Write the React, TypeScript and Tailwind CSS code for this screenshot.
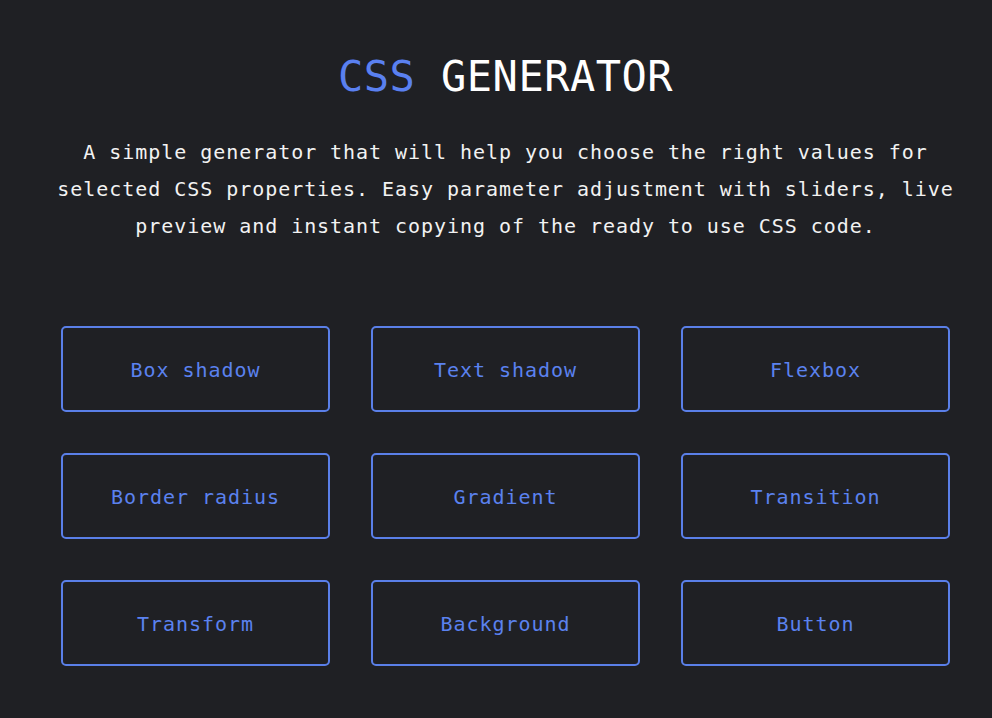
const tools = [
  'Box shadow',
  'Text shadow',
  'Flexbox',
  'Border radius',
  'Gradient',
  'Transition',
  'Transform',
  'Background',
  'Button',
];

export default function App() {
  return (
    <div className="min-h-screen bg-[#1f2024] text-white font-['DejaVu_Sans_Mono',monospace] flex justify-center pl-[19px]">
      <div className="w-[904px] flex flex-col items-center">
        <h1 className="mt-[51px] text-[42px] leading-[52px] tracking-[0.5px]">
          <span className="text-[#5a80f0]">CSS</span> GENERATOR
        </h1>
        <p className="mt-[31px] text-center text-[20px] leading-[37px] tracking-[0.95px] text-[#f2f2f2]">
          A simple generator that will help you choose the right values for selected CSS properties. Easy parameter adjustment with sliders, live preview and instant copying of the ready to use CSS code.
        </p>
        <div className="mt-[81px] grid grid-cols-3 gap-x-[41px] gap-y-[41.5px] w-[889px]">
          {tools.map(t => (
            <button key={t}
              className="h-[85.5px] pt-[2px] border-2 border-[#5a7fe8] rounded-[5px] text-[#5b82ef] text-[20px] tracking-[0.95px] flex items-center justify-center">
              {t}
            </button>
          ))}
        </div>
      </div>
    </div>
  );
}
